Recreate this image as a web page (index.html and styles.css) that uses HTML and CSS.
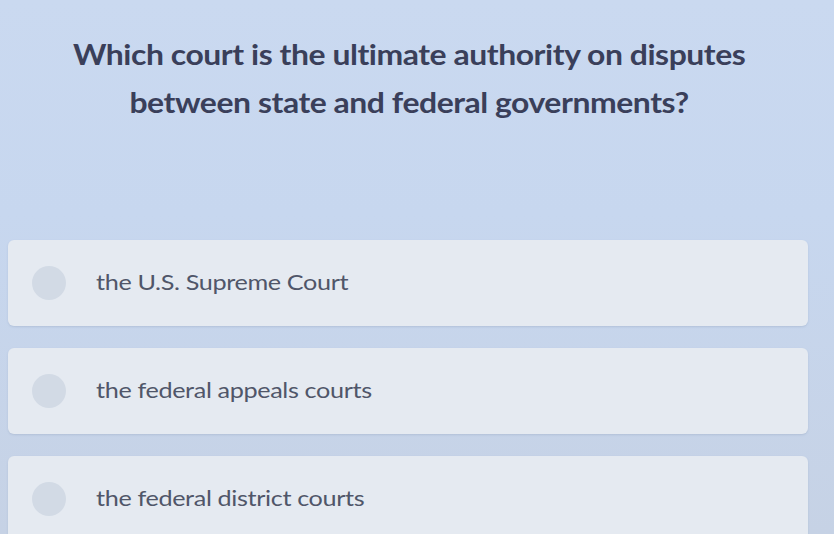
FILE: index.html
```html
<!DOCTYPE html>
<html>
<head>
<meta charset="utf-8">
<link rel="stylesheet" href="styles.css">
</head>
<body>
<div class="page">
  <h1 class="question">Which court is the ultimate authority on disputes<br>between state and federal governments?</h1>
  <div class="options">
    <div class="option"><span class="radio"></span><span class="label">the U.S. Supreme Court</span></div>
    <div class="option"><span class="radio"></span><span class="label">the federal appeals courts</span></div>
    <div class="option"><span class="radio"></span><span class="label">the federal district courts</span></div>
  </div>
</div>
</body>
</html>
```
FILE: styles.css
```css
html, body {
  margin: 0;
  padding: 0;
  height: 100%;
  overflow: hidden;
}
body {
  font-family: Lato, "Open Sans", sans-serif;
  background: linear-gradient(180deg, #cad9f0 0%, #c7d7ef 40%, #c6d2e5 100%);
}
.page {
  display: flex;
  flex-direction: column;
  padding: 0 26px 0 8px;
}
.question {
  margin: 30px 0 0 0;
  text-align: center;
  font-size: 28px;
  font-weight: 700;
  line-height: 48px;
  color: #3a3f5a;
  letter-spacing: -0.4px;
  padding-left: 2px;
  transform: scaleX(1.14);
}
.options {
  display: flex;
  flex-direction: column;
  gap: 22px;
  margin-top: 114px;
}
.option {
  height: 86px;
  display: flex;
  align-items: center;
  gap: 30px;
  padding-left: 24px;
  background: #e5eaf1;
  border-radius: 6px;
  box-shadow: 0 1px 2px rgba(120, 140, 170, 0.25);
}
.radio {
  width: 34px;
  height: 34px;
  border-radius: 50%;
  background: #d2dae5;
  flex: none;
}
.label {
  display: inline-block;
  font-size: 21px;
  color: #505669;
  letter-spacing: -0.3px;
  margin-top: -4px;
  transform: scaleX(1.2);
  transform-origin: left center;
}
```
